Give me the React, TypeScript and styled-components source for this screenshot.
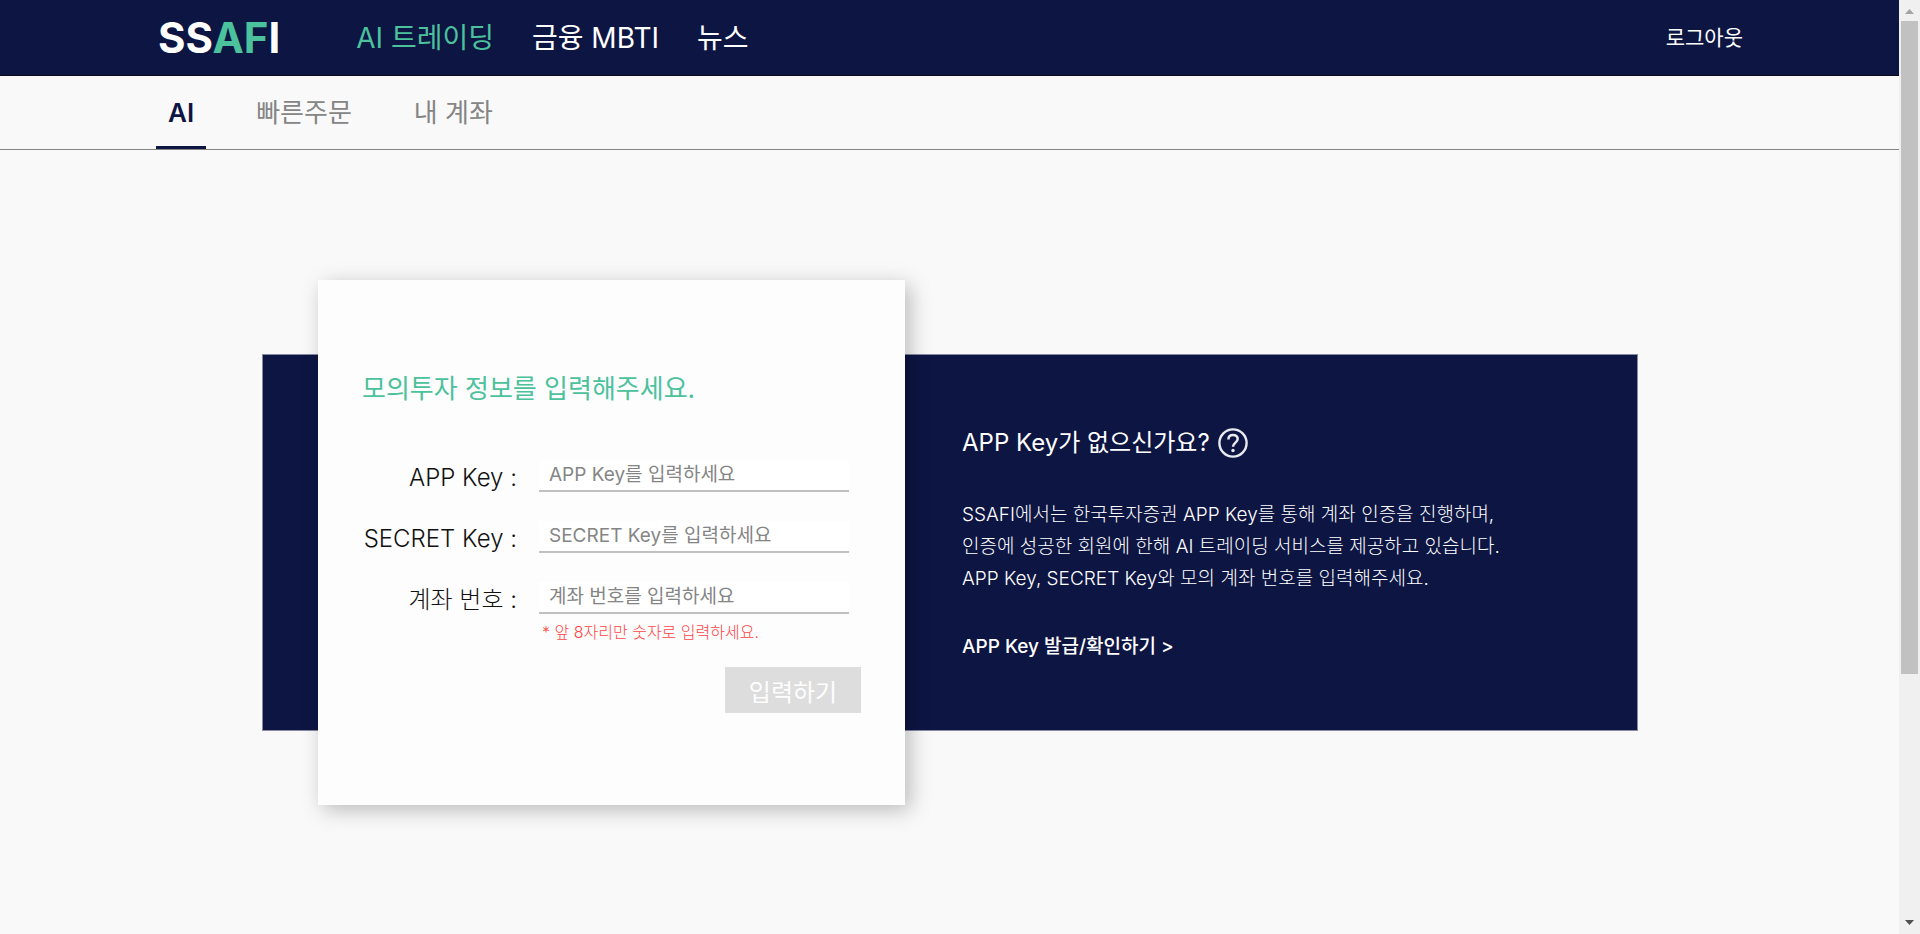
import React from "react";
import styled, { createGlobalStyle } from "styled-components";

const navy = "#0d1543";
const green = "#4bc19c";

const GlobalStyle = createGlobalStyle`
  * { box-sizing: border-box; }
  body {
    margin: 0;
    background: #f9f9f9;
    color: #111;
    font-family: Inter, "Noto Sans CJK KR", sans-serif;
  }
  a { color: inherit; text-decoration: none; }
  h1, h2, p { margin: 0; font-weight: 400; }
  button, input { font: inherit; }
`;

const Screen = styled.div`
  display: flex;
  height: 100vh;
  overflow: hidden;
`;

const Page = styled.div`
  flex: 1;
  min-width: 0;
`;

const Header = styled.header`
  display: flex;
  align-items: center;
  height: 76px;
  padding: 0 156px;
  background: ${navy};
  border-bottom: 1px solid #0a0a1c;
  color: #fff;
`;

const Logo = styled.a`
  padding-left: 2px;
  margin-right: 76px;
  font-size: 42px;
  font-weight: 700;
  line-height: 48px;

  span { color: ${green}; }
`;

const MainNav = styled.nav`
  display: flex;
  flex: 1;
  gap: 38px;
`;

const NavLink = styled.a<{ $active?: boolean }>`
  font-size: 28px;
  line-height: 42px;
  color: ${({ $active }) => ($active ? green : "#fff")};
`;

const LogoutButton = styled.button`
  padding: 0;
  border: 0;
  background: none;
  color: #fff;
  font-size: 21px;
  line-height: 32px;
`;

const Tabs = styled.nav`
  display: flex;
  gap: 38px;
  height: 74px;
  padding: 0 156px;
  border-bottom: 1px solid #858585;
`;

const Tab = styled.a<{ $active?: boolean }>`
  padding: 16px 12px 0;
  border-bottom: 3px solid ${({ $active }) => ($active ? navy : "transparent")};
  color: ${({ $active }) => ($active ? navy : "#858585")};
  font-size: 26px;
  font-weight: ${({ $active }) => ($active ? 600 : 400)};
  line-height: 42px;
`;

const Main = styled.main`
  padding: 204px 261px 0 262px;
`;

const Panel = styled.section`
  display: flex;
  align-items: center;
  border: 1px solid #868aa2;
  background: ${navy};
  color: #fff;
`;

const Card = styled.form`
  flex: none;
  width: 587px;
  margin: -75px 57px -75px 55px;
  padding: 92px 44px;
  background: #fdfdfd;
  box-shadow: 5px 5px 20px rgba(0, 0, 0, 0.25);
  color: #111;
`;

const CardTitle = styled.h1`
  margin-bottom: 54px;
  color: ${green};
  font-size: 26px;
  line-height: 34px;
`;

const Fields = styled.div`
  display: grid;
  grid-template-columns: 155px 310px;
  column-gap: 22px;
  row-gap: 29px;
`;

const Label = styled.label`
  align-self: end;
  font-size: 24px;
  font-weight: 300;
  line-height: 28px;
  text-align: right;
  white-space: nowrap;
`;

const TextInput = styled.input`
  width: 100%;
  height: 32px;
  padding: 0 10px 2px;
  border: 0;
  border-bottom: 2px solid #c0c0c0;
  border-radius: 0;
  outline: 0;
  background: #fff;
  font-size: 19px;

  &::placeholder { color: #858585; opacity: 1; }
`;

const Hint = styled.p`
  padding: 6px 0 0 180px;
  color: #ff4545;
  font-size: 16px;
  font-weight: 300;
  line-height: 24px;
`;

const SubmitButton = styled.button`
  display: block;
  width: 136px;
  height: 46px;
  margin: 23px 0 0 auto;
  padding: 0;
  border: 0;
  background: #ddd;
  color: #fdfdfd;
  font-size: 24px;
`;

const Info = styled.div`
  flex: 1;
  min-width: 0;
`;

const InfoTitle = styled.h2`
  display: flex;
  align-items: center;
  gap: 8px;
  font-size: 24px;
  line-height: 32px;
`;

const InfoText = styled.p`
  margin: 40px 0;
  font-size: 19px;
  font-weight: 300;
  line-height: 32px;
`;

const InfoLink = styled.a`
  font-size: 19px;
  font-weight: 500;
  line-height: 24px;
`;

const ScrollTrack = styled.div`
  display: flex;
  flex: none;
  flex-direction: column;
  align-items: center;
  width: 21px;
  background: #f0f0f0;
`;

const ScrollThumb = styled.div`
  flex: 653;
  width: 17px;
  background: #c1c1c1;
`;

const ScrollRest = styled.div`
  flex: 239;
`;

const ScrollArrow = styled.svg`
  flex: none;
  width: 17px;
  height: 21px;
`;

const fields = [
  { id: "app-key", label: "APP Key :", placeholder: "APP Key를 입력하세요" },
  { id: "secret-key", label: "SECRET Key :", placeholder: "SECRET Key를 입력하세요" },
  { id: "account", label: "계좌 번호 :", placeholder: "계좌 번호를 입력하세요" },
];

const QuestionIcon = () => (
  <svg width="30" height="30" viewBox="0 0 30 30" fill="none" stroke="#e9eaf0" aria-hidden="true">
    <circle cx="15" cy="15" r="13.6" strokeWidth="2.4" />
    <path d="M10.4 11.4C10.4 8.600 12.300 6.900 15 6.900s4.700 1.700 4.700 4.200c0 3.300-4.700 3.900-4.700 7.600" strokeWidth="2.500" />
    <circle cx="15" cy="22.500" r="1.700" fill="#e9eaf0" stroke="none" />
  </svg>
);

export default function App() {
  return (
    <>
      <GlobalStyle />
      <Screen>
        <Page>
          <Header>
            <Logo href="#">SS<span>AF</span>I</Logo>
            <MainNav>
              <NavLink href="#trading" $active>AI 트레이딩</NavLink>
              <NavLink href="#mbti">금융 MBTI</NavLink>
              <NavLink href="#news">뉴스</NavLink>
            </MainNav>
            <LogoutButton type="button">로그아웃</LogoutButton>
          </Header>
          <Tabs>
            <Tab href="#ai" $active>AI</Tab>
            <Tab href="#order">빠른주문</Tab>
            <Tab href="#my-account">내 계좌</Tab>
          </Tabs>
          <Main>
            <Panel>
              <Card onSubmit={(e) => e.preventDefault()}>
                <CardTitle>모의투자 정보를 입력해주세요.</CardTitle>
                <Fields>
                  {fields.map((f) => (
                    <React.Fragment key={f.id}>
                      <Label htmlFor={f.id}>{f.label}</Label>
                      <TextInput id={f.id} type="text" placeholder={f.placeholder} />
                    </React.Fragment>
                  ))}
                </Fields>
                <Hint>* 앞 8자리만 숫자로 입력하세요.</Hint>
                <SubmitButton type="submit">입력하기</SubmitButton>
              </Card>
              <Info>
                <InfoTitle>APP Key가 없으신가요? <QuestionIcon /></InfoTitle>
                <InfoText>
                  SSAFI에서는 한국투자증권 APP Key를 통해 계좌 인증을 진행하며,<br />
                  인증에 성공한 회원에 한해 AI 트레이딩 서비스를 제공하고 있습니다.<br />
                  APP Key, SECRET Key와 모의 계좌 번호를 입력해주세요.
                </InfoText>
                <InfoLink href="#issue">APP Key 발급/확인하기 &gt;</InfoLink>
              </Info>
            </Panel>
          </Main>
        </Page>
        <ScrollTrack aria-hidden="true">
          <ScrollArrow viewBox="0 0 17 21"><path d="M4 14h9L8.5 9z" fill="#a3a3a3" /></ScrollArrow>
          <ScrollThumb />
          <ScrollRest />
          <ScrollArrow viewBox="0 0 17 21"><path d="M4 7h9l-4.5 5z" fill="#505050" /></ScrollArrow>
        </ScrollTrack>
      </Screen>
    </>
  );
}
